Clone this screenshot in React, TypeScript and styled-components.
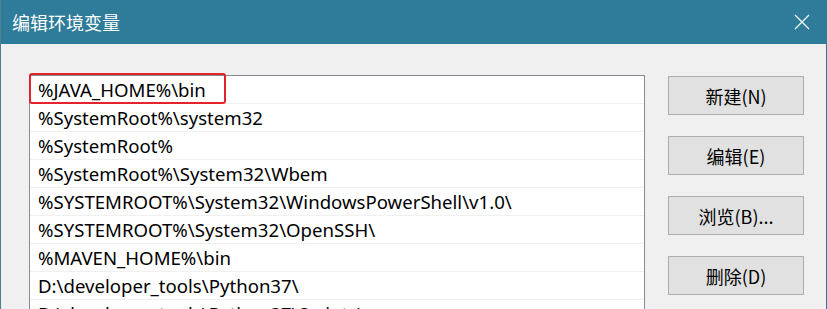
import React from "react";
import styled, { createGlobalStyle } from "styled-components";

const Global = createGlobalStyle`
  html, body { margin: 0; padding: 0; background: #f0f0f0; }
  body { width: 827px; height: 309px; overflow: hidden; }
`;

const FONT = `"Noto Sans", "Noto Sans CJK SC", sans-serif`;

const Window = styled.div`
  width: 827px;
  height: 309px;
  box-sizing: border-box;
  border-left: 1px solid #4f7f92;
  border-right: 1px solid #2b7c9c;
  background: #f0f0f0;
  display: flex;
  flex-direction: column;
  font-family: ${FONT};
  overflow: hidden;
`;

const TitleBar = styled.div`
  height: 44px;
  flex: none;
  background: #2e7c9a;
  display: flex;
  align-items: center;
  justify-content: space-between;
  padding: 0 16px 0 11px;
`;

const Title = styled.div`
  color: #ffffff;
  font-size: 18px;
  font-family: "Noto Sans CJK SC", sans-serif;
  line-height: 1;
  padding-bottom: 1px;
`;

const CloseIcon = styled.svg`
  width: 16px;
  height: 16px;
  display: block;
`;

const Body = styled.div`
  display: flex;
  gap: 23px;
  padding: 31px 22px 0 28px;
  align-items: flex-start;
`;

const ListWrap = styled.div`
  position: relative;
  width: 616px;
  flex: none;
`;

const List = styled.div`
  border: 1px solid #868a91;
  background: #ffffff;
  display: flex;
  flex-direction: column;
`;

const Row = styled.div`
  height: 27px;
  border-bottom: 1px solid #f0f0f0;
  display: flex;
  align-items: center;
  padding-left: 8px;
  font-size: 18.6px;
  color: #000000;
  white-space: nowrap;
  overflow: hidden;
`;

const Highlight = styled.div`
  position: absolute;
  left: 0;
  top: -2px;
  width: 197px;
  height: 31px;
  box-sizing: border-box;
  border: 2px solid #e5232c;
  border-radius: 3px;
  pointer-events: none;
`;

const Buttons = styled.div`
  display: flex;
  flex-direction: column;
  gap: 21px;
  padding-top: 1px;
`;

const Button = styled.div`
  width: 136px;
  height: 39px;
  box-sizing: border-box;
  border: 1px solid #adadad;
  background: #e1e1e1;
  display: flex;
  align-items: center;
  justify-content: center;
  font-size: 18px;
  color: #000000;
  font-family: "Noto Sans CJK SC", sans-serif;
`;

const items = [
  "%JAVA_HOME%\\bin",
  "%SystemRoot%\\system32",
  "%SystemRoot%",
  "%SystemRoot%\\System32\\Wbem",
  "%SYSTEMROOT%\\System32\\WindowsPowerShell\\v1.0\\",
  "%SYSTEMROOT%\\System32\\OpenSSH\\",
  "%MAVEN_HOME%\\bin",
  "D:\\developer_tools\\Python37\\",
  "D:\\developer_tools\\Python37\\Scripts\\",
];

export default function App() {
  return (
    <>
      <Global />
      <Window>
        <TitleBar>
          <Title>编辑环境变量</Title>
          <CloseIcon viewBox="0 0 16 16">
            <path d="M1 1 L15 15 M15 1 L1 15" stroke="#ffffff" strokeWidth="1.2" fill="none" />
          </CloseIcon>
        </TitleBar>
        <Body>
          <ListWrap>
            <List>
              {items.map((t, i) => (
                <Row key={i}>{t}</Row>
              ))}
            </List>
            <Highlight />
          </ListWrap>
          <Buttons>
            <Button>新建(N)</Button>
            <Button>编辑(E)</Button>
            <Button>浏览(B)...</Button>
            <Button>删除(D)</Button>
          </Buttons>
        </Body>
      </Window>
    </>
  );
}
